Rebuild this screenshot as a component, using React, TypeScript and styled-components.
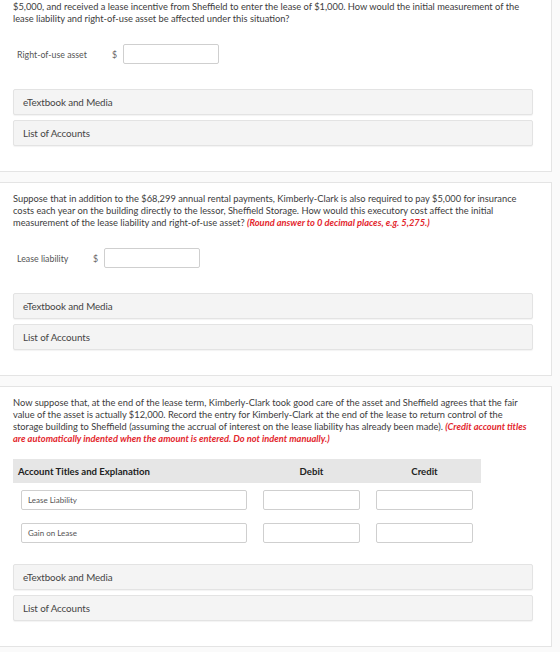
import React from 'react'
import styled, { createGlobalStyle } from 'styled-components'

const GlobalStyle = createGlobalStyle`
  html, body {
    margin: 0;
    padding: 0;
    background: #fafafa;
  }
  body {
    font-family: Lato, 'Open Sans', sans-serif;
    color: #3a3a3a;
    overflow: hidden;
  }
`

const Page = styled.div`
  display: flex;
  flex-direction: column;
  gap: 10px;
  padding-right: 8px;
  width: 560px;
  height: 652px;
  box-sizing: border-box;
  overflow: hidden;
`

const Card = styled.section<{ $offset?: number }>`
  margin-top: ${(p) => (p.$offset ? `${p.$offset}px` : '0')};
  margin-left: -1px;
  background: #fff;
  border: 1px solid #e4e4e4;
  padding: 10px 18px 25px 13px;
  flex-shrink: 0;
`

const Question = styled.p`
  margin: 0;
  font-size: 9.3px;
  line-height: 12px;
  color: #3c3c3c;
`

const Hint = styled.em`
  color: #e3262d;
  font-weight: 700;
`

const AnswerRow = styled.div`
  display: flex;
  align-items: center;
  margin-top: 19px;
  padding-left: 4px;
`

const Label = styled.span<{ $width: number }>`
  width: ${(p) => p.$width}px;
  font-size: 8.8px;
  color: #555;
`

const Dollar = styled.span`
  font-size: 8.8px;
  color: #666;
  margin-right: 6px;
`

const Field = styled.div<{ $width: number }>`
  width: ${(p) => p.$width}px;
  height: 20px;
  box-sizing: border-box;
  border: 1px solid #cfcfcf;
  border-radius: 2px;
  background: #fff;
  display: flex;
  align-items: center;
  padding-left: 6px;
  font-size: 8px;
  color: #555;
`

const Panels = styled.div<{ $gap: number }>`
  display: flex;
  flex-direction: column;
  gap: 5px;
  margin-top: ${(p) => p.$gap}px;
`

const Panel = styled.div`
  height: 26px;
  box-sizing: border-box;
  background: #f4f4f4;
  border: 1px solid #e3e3e3;
  border-radius: 2px;
  box-shadow: 0 1px 1px rgba(0, 0, 0, 0.05);
  display: flex;
  align-items: center;
  padding-left: 9px;
  font-size: 9.8px;
  color: #444;
  letter-spacing: -0.1px;
`

const Journal = styled.div`
  margin-top: 14px;
  width: 468px;
`

const JournalGrid = styled.div`
  display: grid;
  grid-template-columns: 242px 113px 113px;
`

const HeadRow = styled(JournalGrid)`
  height: 24px;
  background: #e6e6e6;
  align-items: center;
`

const HeadCell = styled.div<{ $center?: boolean }>`
  font-size: 9.6px;
  font-weight: 700;
  color: #222;
  text-align: ${(p) => (p.$center ? 'center' : 'left')};
  padding-left: ${(p) => (p.$center ? '0' : '5px')};
`

const EntryRow = styled(JournalGrid)`
  margin-top: 7px;
  justify-items: center;
  & + & {
    margin-top: 13px;
  }
`

const AccountField = styled(Field)`
  justify-self: start;
  margin-left: 8px;
`

const PanelPair = ({ gap }: { gap: number }) => (
  <Panels $gap={gap}>
    <Panel>eTextbook and Media</Panel>
    <Panel>List of Accounts</Panel>
  </Panels>
)

const entries = ['Lease Liability', 'Gain on Lease']

export default function App() {
  return (
    <>
      <GlobalStyle />
      <Page>
        <Card $offset={-10}>
          <Question>
            $5,000, and received a lease incentive from Sheffield to enter the lease of $1,000. How would the initial measurement of the
            lease liability and right-of-use asset be affected under this situation?
          </Question>
          <AnswerRow>
            <Label $width={95}>Right-of-use asset</Label>
            <Dollar>$</Dollar>
            <Field $width={96} />
          </AnswerRow>
          <PanelPair gap={25} />
        </Card>

        <Card>
          <Question>
            Suppose that in addition to the $68,299 annual rental payments, Kimberly-Clark is also required to pay $5,000 for insurance
            costs each year on the building directly to the lessor, Sheffield Storage. How would this executory cost affect the initial
            measurement of the lease liability and right-of-use asset?{' '}
            <Hint>(Round answer to 0 decimal places, e.g. 5,275.)</Hint>
          </Question>
          <AnswerRow>
            <Label $width={76}>Lease liability</Label>
            <Dollar>$</Dollar>
            <Field $width={96} />
          </AnswerRow>
          <PanelPair gap={25} />
        </Card>

        <Card>
          <Question>
            Now suppose that, at the end of the lease term, Kimberly-Clark took good care of the asset and Sheffield agrees that the fair
            value of the asset is actually $12,000. Record the entry for Kimberly-Clark at the end of the lease to return control of the
            storage building to Sheffield (assuming the accrual of interest on the lease liability has already been made).{' '}
            <Hint>
              (Credit account titles are automatically indented when the amount is entered. Do not indent manually.)
            </Hint>
          </Question>
          <Journal>
            <HeadRow>
              <HeadCell>Account Titles and Explanation</HeadCell>
              <HeadCell $center>Debit</HeadCell>
              <HeadCell $center>Credit</HeadCell>
            </HeadRow>
            {entries.map((name) => (
              <EntryRow key={name}>
                <AccountField $width={226}>{name}</AccountField>
                <Field $width={97} />
                <Field $width={97} />
              </EntryRow>
            ))}
          </Journal>
          <PanelPair gap={21} />
        </Card>
      </Page>
    </>
  )
}
